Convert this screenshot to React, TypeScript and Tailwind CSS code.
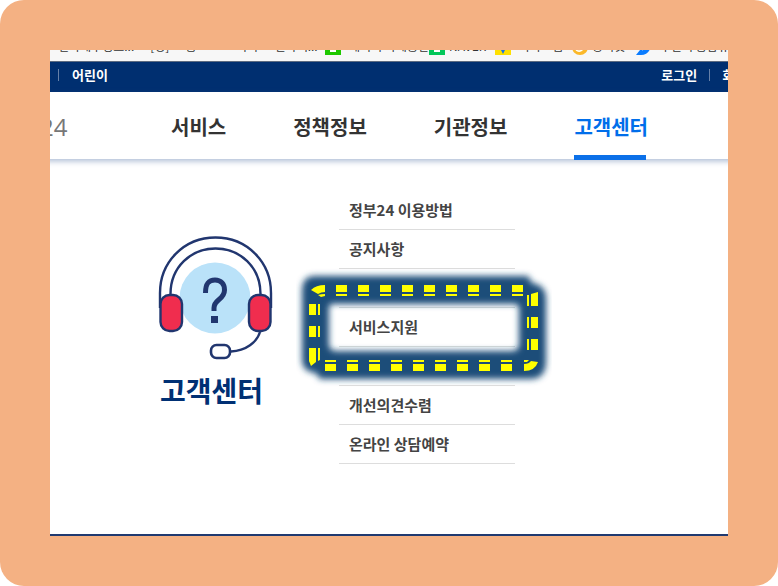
const bookmarks = [
  { label: '전자세무정보...', gap: 'ml-2' },
  { label: '[경]', gap: 'ml-4' },
  { label: '홍', gap: 'ml-4' },
  { label: '카카', gap: 'ml-10' },
  { label: '전자책...', gap: 'ml-4' },
];

function BookmarkBar() {
  return (
    <div className="flex h-[11px] items-end overflow-hidden whitespace-nowrap bg-[#f7f7f7] text-[12px] leading-[10px] text-[#333]">
      <div className="flex h-5 shrink-0 items-start">
        <div className="flex w-[275px] shrink-0">
          {bookmarks.map((b) => (
            <span key={b.label} className={b.gap}>{b.label}</span>
          ))}
        </div>
        <span className="h-3.5 w-4 shrink-0 border-x-[5px] border-b-[3px] border-[#1ec800] bg-white" />
        <span className="ml-2 w-20 shrink-0">네이버 카페공간</span>
        <span className="h-3.5 w-4 shrink-0 border-x-[5px] border-b-[3px] border-[#03c75a] bg-white" />
        <span className="ml-1 w-[46px] shrink-0">NAVER</span>
        <svg className="h-3.5 w-4 shrink-0" viewBox="0 0 16 14" aria-hidden="true">
          <path d="M0 0h16v14H0z" fill="#ffe000" />
          <path d="M5 7h6l-3 6z" fill="#1a73e8" />
        </svg>
        <span className="ml-2 w-[53px] shrink-0">카카오맵</span>
        <svg className="h-3.5 w-4 shrink-0" viewBox="0 0 16 14" aria-hidden="true">
          <circle cx="8" cy="6" r="8" fill="#fbb829" />
          <path d="M4 9q4 3 8-2" fill="none" stroke="#fff" strokeWidth="1.5" />
        </svg>
        <span className="ml-1 w-11 shrink-0">장터넷</span>
        <svg className="h-3.5 w-4 shrink-0" viewBox="0 0 16 14" aria-hidden="true">
          <path d="M4 0h11v5q-2 9-10 9H0l4-5z" fill="#0a7cff" />
          <path d="M6 9l4-3" stroke="#fff" strokeWidth="1.5" />
        </svg>
        <span className="ml-2 shrink-0">부산시 통합뷰어</span>
      </div>
    </div>
  );
}

function UtilityBar() {
  return (
    <div className="flex h-[31px] items-center justify-between overflow-hidden border-t border-[#5d6b80] bg-[#002f70] pb-1 text-[13px] font-bold leading-5 text-white">
      <div className="flex items-center gap-[13px] pl-2">
        <span className="h-3 w-px bg-[#6680a8]" />
        <a href="#kids">어린이</a>
      </div>
      <div className="-mr-[42px] flex shrink-0 items-center">
        <a href="#login">로그인</a>
        <span className="mx-3 h-3 w-px bg-[#6680a8]" />
        <a href="#join">회원가입</a>
      </div>
    </div>
  );
}

const sections = [
  { label: '서비스', active: false },
  { label: '정책정보', active: false },
  { label: '기관정보', active: false },
  { label: '고객센터', active: true },
];

function MainNav() {
  return (
    <header className="-mx-2 flex h-[67px] bg-white px-2 shadow-[0_2px_6px_rgba(40,80,145,0.4)]">
      <div className="w-[121px] shrink-0 overflow-hidden">
        <a
          href="#home"
          className="-ml-2.5 block font-['Open_Sans','Noto_Sans',sans-serif] text-[24px] leading-[70px] text-[#777]"
        >
          24
        </a>
      </div>
      <nav className="flex gap-[67px] whitespace-nowrap text-[20px] font-bold leading-[70px]">
        {sections.map((s) =>
          s.active ? (
            <a key={s.label} href="#support" aria-current="page" className="flex h-[68px] flex-col justify-between text-[#006eea]">
              <span className="h-[63px]">{s.label}</span>
              <span className="h-[5px] w-[72px] bg-[#0b70e8]" />
            </a>
          ) : (
            <a key={s.label} href="#section" className="text-[#333]">{s.label}</a>
          ),
        )}
      </nav>
    </header>
  );
}

function HeadsetIcon() {
  return (
    <svg width="115" height="124" viewBox="0 0 115 124" fill="none" aria-hidden="true">
      <circle cx="57" cy="62" r="35.5" fill="#bae2f9" />
      <g stroke="#21366f" strokeWidth="2.4">
        <path d="M2 72V57C2 26 26 1.5 57.500 1.5S113 26 113 57v15" />
        <path d="M12.500 58C12.500 31 33 12.500 57.500 12.500S102.500 31 102.500 58" />
        <path d="M102 96c-3 10-14 19-29 19.500" />
        <rect x="53" y="109" width="19" height="13" rx="5.5" fill="#fff" strokeWidth="2.600" />
        <rect x="2.500" y="59" width="21.500" height="36" rx="9" fill="#f02d4e" />
        <rect x="91" y="59" width="21.500" height="36" rx="9" fill="#f02d4e" />
      </g>
      <path d="M47.500 57C47.500 47 51 44 57 44S66.500 48 66.500 54C66.500 64 56 63 56 72v3" stroke="#21366f" strokeWidth="5" />
      <path d="M53 80h7v7h-7z" fill="#21366f" />
    </svg>
  );
}

const topDashes = [40, 62, 84, 106, 128, 150, 172, 194, 216];
const bottomDashes = [29, 51, 73, 95, 117, 139, 161, 183, 205];
const leftDashes = [36, 58, 80];
const rightDashes = [27, 49, 71];

function Highlight() {
  return (
    <svg
      className="pointer-events-none absolute -left-[43px] -top-10 max-w-none"
      width="256"
      height="120"
      viewBox="0 0 256 120"
      fill="none"
      aria-hidden="true"
    >
      <defs>
        <filter id="glow" x="-10%" y="-20%" width="120%" height="140%">
          <feGaussianBlur stdDeviation="3" />
        </filter>
      </defs>
      <path
        d="M19 8H232L236 15Q250 17 250 31V93Q250 111 234 111H24L20 105Q6 104 6 91V23Q6 8 19 8ZM37 36Q33 36 33 40V76Q33 83 40 83H216Q223 83 223 76V40Q223 36 218 36Z"
        fill="#1f4e79"
        fillRule="evenodd"
        filter="url(#glow)"
      />
      <g fill="#ff0">
        {topDashes.map((x) => (
          <path key={x} d={`M${x} 17h11v7h-11zM${x} 26h11v2h-11z`} />
        ))}
        {bottomDashes.map((x) => (
          <path key={x} d={`M${x} 92h11v2h-11zM${x} 96h11v7h-11z`} />
        ))}
        {leftDashes.map((y) => (
          <path key={y} d={`M13 ${y}h7v11h-7zM22 ${y}h2v11h-2z`} />
        ))}
        {rightDashes.map((y) => (
          <path key={y} d={`M231 ${y}h2v11h-2zM235 ${y}h7v11h-7z`} />
        ))}
        <path d="M15 22Q20 17 29 17v7q-4 0-7 2zM22 27q3-1 7-1v2l-4 1z" />
        <path d="M13 89h7v5l-5 4-2-5zM22 89h2v3l-2 1z" />
        <path d="M235 26l7-2v4h-7z" />
        <path d="M228 96q5 0 7-3l7 1q-3 9-14 9zM228 92h5l-2 2h-3z" />
      </g>
    </svg>
  );
}

const menu = ['정부24 이용방법', '공지사항', '', '서비스지원', '', '개선의견수렴', '온라인 상담예약'];

function SupportPanel() {
  return (
    <main className="flex flex-1 items-start gap-[66px] pl-[108px] pt-8">
      <div className="flex shrink-0 flex-col pt-[45px]">
        <HeadsetIcon />
        <h1 className="mt-2.5 pl-0.5 text-[28px] font-bold leading-10 text-[#003074]">고객센터</h1>
      </div>
      <ul className="w-44 shrink-0 text-[15px] font-bold leading-[38px] text-[#444]">
        {menu.map((label, i) => (
          <li key={i} className="relative h-[39px] border-b border-[#ddd]">
            {label && <a href="#item" className="block whitespace-nowrap px-2.5">{label}</a>}
            {label === '서비스지원' && <Highlight />}
          </li>
        ))}
      </ul>
    </main>
  );
}

export default function App() {
  return (
    <div className="bg-white font-['Noto_Sans_CJK_KR',sans-serif]">
      <div className="flex min-h-screen rounded-3xl bg-[#f4b183] p-[50px]">
        <div className="flex min-w-0 flex-1 flex-col overflow-hidden border-b-2 border-[#203a70] bg-white">
          <BookmarkBar />
          <UtilityBar />
          <MainNav />
          <SupportPanel />
        </div>
      </div>
    </div>
  );
}
